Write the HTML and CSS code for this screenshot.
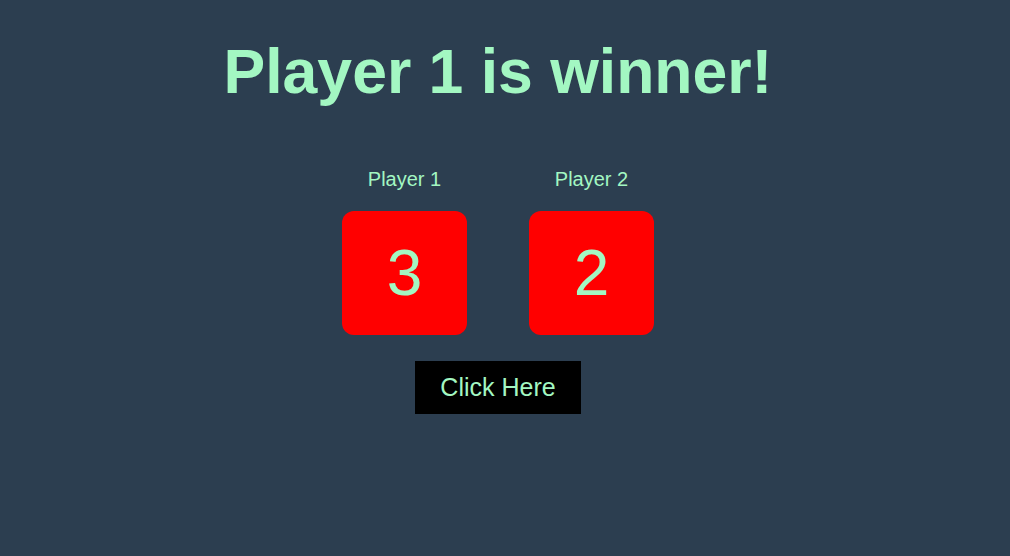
FILE: index.html
```html
<!DOCTYPE html>
<html>
<head>
<meta charset="utf-8">
<title>Game</title>
<link rel="stylesheet" href="styles.css">
</head>
<body>
<main class="game">
  <h1 class="title">Player 1 is winner!</h1>
  <div class="players">
    <div class="player">
      <div class="player-name">Player 1</div>
      <div class="score">3</div>
    </div>
    <div class="player">
      <div class="player-name">Player 2</div>
      <div class="score">2</div>
    </div>
  </div>
  <button class="btn">Click Here</button>
</main>
</body>
</html>
```

FILE: styles.css
```css
html, body {
  margin: 0;
  padding: 0;
  height: 100%;
}
body {
  background: #2c3e50;
  font-family: "Liberation Sans", Arial, sans-serif;
  color: #a3f7c2;
}
.game {
  display: flex;
  flex-direction: column;
  align-items: center;
  width: 996px;
  padding-top: 35px;
}
.title {
  margin: 0;
  font-size: 62.5px;
  font-weight: bold;
  line-height: 73px;
}
.players {
  display: flex;
  gap: 62px;
  margin-top: 60px;
}
.player {
  display: flex;
  flex-direction: column;
  align-items: center;
}
.player-name {
  font-size: 20px;
  line-height: 23px;
}
.score {
  margin-top: 20px;
  width: 125px;
  height: 124px;
  border-radius: 12px;
  background: #ff0000;
  display: flex;
  align-items: center;
  justify-content: center;
  font-size: 64px;
}
.btn {
  margin-top: 26px;
  width: 166px;
  height: 53px;
  border: none;
  background: #000;
  color: #a3f7c2;
  font-family: "Liberation Sans", Arial, sans-serif;
  font-size: 25px;
  padding: 0;
}
```
